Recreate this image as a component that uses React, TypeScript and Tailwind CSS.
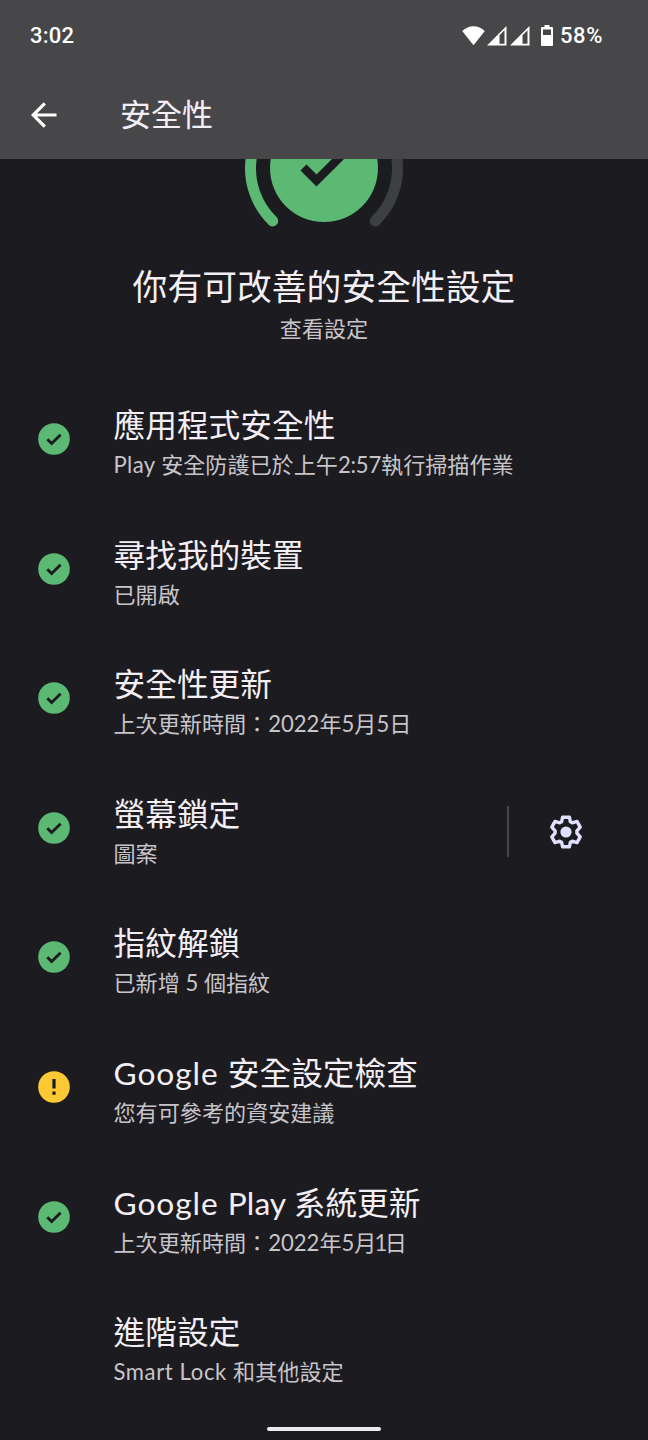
import type { ReactNode } from "react";

type Status = "ok" | "warning" | "none";

type Item = {
  id: string;
  title: ReactNode;
  summary: ReactNode;
  status: Status;
  settings?: boolean;
};

const items: Item[] = [
  {
    id: "apps",
    title: "應用程式安全性",
    summary: (
      <>
        <span className="tracking-[0.4px]">Play </span>安全防護已於上午
        <span className="tracking-[-0.2px]">2:57</span>執行掃描作業
      </>
    ),
    status: "ok",
  },
  { id: "find", title: "尋找我的裝置", summary: "已開啟", status: "ok" },
  { id: "update", title: "安全性更新", summary: "上次更新時間：2022年5月5日", status: "ok" },
  { id: "lock", title: "螢幕鎖定", summary: "圖案", status: "ok", settings: true },
  { id: "finger", title: "指紋解鎖", summary: "已新增 5 個指紋", status: "ok" },
  {
    id: "checkup",
    title: (
      <>
        <span className="tracking-[0.95px]">Google </span>安全設定檢查
      </>
    ),
    summary: "您有可參考的資安建議",
    status: "warning",
  },
  {
    id: "play",
    title: (
      <>
        <span className="tracking-[0.95px]">Google </span>
        <span className="tracking-[0.1px]">Play </span>系統更新
      </>
    ),
    summary: (
      <>
        上次更新時間：2022年5月<span className="-ml-[2px] tracking-[-2.5px]">1</span>日
      </>
    ),
    status: "ok",
  },
  {
    id: "advanced",
    title: "進階設定",
    summary: (
      <>
        <span className="tracking-[0.6px]">Smart Lock </span>和其他設定
      </>
    ),
    status: "none",
  },
];

const StatusIcon = ({ status }: { status: Status }) => {
  if (status === "none") return <div className="size-8" />;

  return (
    <svg className="size-8" viewBox="0 0 32 32" fill="none">
      <circle cx="16" cy="16" r="15.8" fill={status === "ok" ? "#5bb974" : "#fcc934"} />
      {status === "ok" ? (
        <path d="M9.3 16.3l4.3 4.2 9-8.8" stroke="#1c1b20" strokeWidth="2.9" />
      ) : (
        <path d="M14.4 8h3.2v9.6h-3.2zM14.4 20.6h3.2v3.2h-3.2z" fill="#1c1b20" />
      )}
    </svg>
  );
};

const GearIcon = () => (
  <svg className="size-9" viewBox="-18 -18 36 36" fill="none">
    <path
      d="M-3.400-14.800H3.400L4.400-10.200L6.300-9.200L11-10.600L14.200-4.900L10.900-1.200V1.200L14.200 4.900L11 10.600L6.300 9.200L4.400 10.200L3.400 14.800H-3.400L-4.400 10.200L-6.300 9.200L-11 10.600L-14.200 4.900L-10.900 1.200V-1.200L-14.200-4.900L-11-10.600L-6.300-9.200L-4.400-10.200Z"
      stroke="#e0e1ff"
      strokeWidth="3.400"
      strokeLinejoin="round"
    />
    <circle r="5.600" fill="#e0e1ff" />
  </svg>
);

const SignalIcon = () => (
  <svg className="size-5" viewBox="0 0 20 20">
    <path d="M0 19.500L19.500 0v19.500zM12.500 9.300v8.500h5V4.300z" fill="#fff" fillRule="evenodd" />
  </svg>
);

const StatusBar = () => (
  <div className="flex h-[71px] items-center pr-[45px] pl-[30px] text-[22px] font-medium text-white">
    <span className="font-['Roboto','Noto_Sans_CJK_TC',sans-serif] tracking-[0.2px]">3:02</span>
    <div className="ml-auto flex items-center">
      <svg className="h-5 w-[23px]" viewBox="0 0 23 20">
        <path d="M11.500 19.300L.2 5C3.500 1.800 7.300.2 11.500.2s8 1.600 11.300 4.800z" fill="#fff" />
      </svg>
      <div className="ml-[2px] flex gap-[3px]">
        <SignalIcon />
        <SignalIcon />
      </div>
      <svg className="ml-[11px] h-[21px] w-3" viewBox="0 0 12 21">
        <path d="M3.500 0h5v2h2.500q1 0 1 1v17q0 1-1 1h-10q-1 0-1-1v-17q0-1 1-1h2.500zM2 4.500v5.500h8v-5.500z" fill="#fff" fillRule="evenodd" />
      </svg>
      <span className="ml-[7px] font-['Roboto','Noto_Sans_CJK_TC',sans-serif] tracking-[0.6px]">58%</span>
    </div>
  </div>
);

const Header = () => (
  <header className="h-[159px] bg-[#474649]">
    <StatusBar />
    <div className="flex h-[88px] items-center pl-[31px]">
      <svg className="size-[26px]" viewBox="0 0 26 26" fill="none" stroke="#fff" strokeWidth="3.200">
        <path d="M25.500 13H2.500M13.800 1.300L2.200 13l11.600 11.700" />
      </svg>
      <h1 className="ml-[63px] pb-[2px] text-[31px] leading-none text-[#f3eff4]">安全性</h1>
    </div>
  </header>
);

// Lower part of the status gauge, the rest is scrolled under the header
const Gauge = () => (
  <svg className="mx-auto block h-[72px] w-[160px]" viewBox="0 0 160 72" fill="none">
    <path d="M7.100 0A73.500 73.500 0 0 0 28.700 62" stroke="#5bb974" strokeWidth="11" strokeLinecap="round" />
    <path d="M152.900 0A73.500 73.500 0 0 1 131.300 62" stroke="#3c4043" strokeWidth="11" strokeLinecap="round" />
    <circle cx="80" cy="9" r="54" fill="#5bb974" />
    <path d="M59.500 8.500l13 13L104-10" stroke="#1c1b20" strokeWidth="8.500" />
  </svg>
);

const SecurityRow = ({ item }: { item: Item }) => (
  <li className="flex h-[129.6px] items-start pl-[37.500px]">
    <div className="pt-[33px]">
      <StatusIcon status={item.status} />
    </div>
    <div className="ml-[44px] flex-1 pt-[15px]">
      <h3 className="text-[31.7px] leading-[40px] text-[#f3eff4]">{item.title}</h3>
      <p className="text-[22.1px] leading-[40px] text-[#c8c5ca]">{item.summary}</p>
    </div>
    {item.settings && (
      <div className="mt-[27.500px] flex h-[51px] items-center border-l-2 border-[#47464a] pr-[64px] pl-[39px]">
        <GearIcon />
      </div>
    )}
  </li>
);

export default function App() {
  return (
    <div
      lang="zh-Hant"
      className="flex h-[1440px] w-[648px] flex-col overflow-hidden bg-[#1c1b20] font-['Lato','Noto_Sans_CJK_TC',sans-serif] whitespace-nowrap"
    >
      <Header />
      <section className="h-[231px] text-center">
        <Gauge />
        <h2 className="mt-[31px] text-[34.8px] leading-[50px] text-[#f3eff4]">你有可改善的安全性設定</h2>
        <p className="text-[22.1px] leading-[34px] text-[#c8c5ca]">查看設定</p>
      </section>
      <ul className="h-[1037px]">
        {items.map((item) => (
          <SecurityRow key={item.id} item={item} />
        ))}
      </ul>
      <div className="mx-auto h-[4px] w-[114px] rounded-full bg-[#ececee]" />
    </div>
  );
}
